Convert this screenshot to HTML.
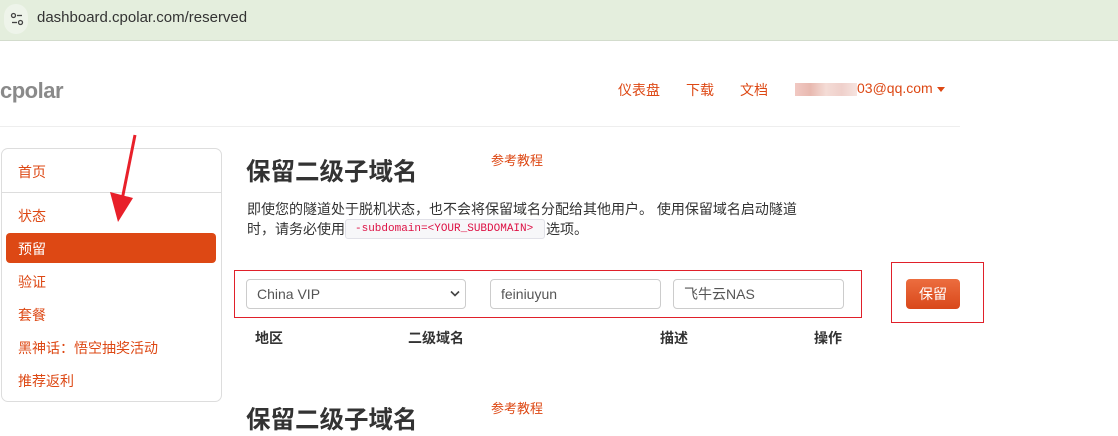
<!DOCTYPE html>
<html><head><meta charset="utf-8"><style>
*{margin:0;padding:0;box-sizing:border-box}
body{width:1118px;height:406px;overflow:hidden;background:#fff;font-family:"Liberation Sans","Noto Sans CJK SC",sans-serif;position:relative;color:#333}
.a{position:absolute;white-space:nowrap}
.o{color:#dd4814}
.nav{font-size:14px;top:80px}
.si{font-size:14px;left:18px;color:#dd4814}
.inp{position:absolute;top:279px;height:30px;border:1px solid #ccc;border-radius:4px;font-size:14px;padding:0 10px;line-height:28px;color:#555;background:#fff}
.th{font-size:14px;font-weight:bold;top:328px}
</style></head><body>
<div class="a" style="left:0;top:0;width:1118px;height:41px;background:#e4eedd;border-bottom:1px solid #d3dccd"></div>
<div class="a" style="left:4px;top:4px;width:24px;height:30px;border-radius:12px;background:#eef4ea"></div>
<svg class="a" style="left:10px;top:12px" width="14" height="14" viewBox="0 0 14 14" fill="none" stroke="#444" stroke-width="1.3"><circle cx="3.5" cy="3.5" r="2"/><line x1="7" y1="3.5" x2="12" y2="3.5"/><circle cx="10.5" cy="10.5" r="2"/><line x1="2" y1="10.5" x2="7" y2="10.5"/></svg>
<div class="a" style="left:37px;top:9px;font-size:15px;color:#333">dashboard.cpolar.com/reserved</div>
<div class="a" style="left:0;top:78px;font-size:22px;font-weight:bold;color:#8a8a8a;letter-spacing:-0.5px">cpolar</div>
<div class="a nav o" style="left:618px">仪表盘</div>
<div class="a nav o" style="left:686px">下载</div>
<div class="a nav o" style="left:740px">文档</div>
<div class="a" style="left:795px;top:83px;width:62px;height:13px;background:linear-gradient(90deg,#f1c9c3,#e8b9b0,#f4dcd6,#efd0cb,#f6e4e0)"></div>
<div class="a nav o" style="left:857px">03@qq.com</div>
<div class="a" style="left:937px;top:87px;border-left:4px solid transparent;border-right:4px solid transparent;border-top:5px solid #dd4814"></div>
<div class="a" style="left:0;top:126px;width:960px;height:1px;background:#eee"></div>
<div class="a" style="left:1px;top:148px;width:221px;height:254px;border:1px solid #ddd;border-radius:7px"></div>
<div class="a" style="left:1px;top:192px;width:221px;height:1px;background:#ddd"></div>
<div class="a si" style="top:162px">首页</div>
<div class="a si" style="top:206px">状态</div>
<div class="a" style="left:6px;top:233px;width:210px;height:30px;background:#dd4814;border-radius:4px"></div>
<div class="a si" style="top:239px;color:#fff">预留</div>
<div class="a si" style="top:272px">验证</div>
<div class="a si" style="top:305px">套餐</div>
<div class="a si" style="top:338px">黑神话：悟空抽奖活动</div>
<div class="a si" style="top:371px">推荐返利</div>
<svg class="a" style="left:100px;top:130px" width="50" height="100"><line x1="35" y1="5" x2="22" y2="70" stroke="#e8202a" stroke-width="3"/><polygon points="10,62 33,68 18,92" fill="#e8202a"/></svg>
<div class="a" style="left:246px;top:153px;font-size:24.5px;font-weight:bold;color:#333">保留二级子域名</div>
<div class="a o" style="left:491px;top:150px;font-size:13px">参考教程</div>
<div class="a" style="left:247px;top:199px;font-size:14px">即使您的隧道处于脱机状态，也不会将保留域名分配给其他用户。 使用保留域名启动隧道</div>
<div class="a" style="left:247px;top:219px;font-size:14px">时，请务必使用</div>
<div class="a" style="left:345px;top:219px;width:200px;height:20px;background:#f7f7f9;border:1px solid #e1e1e8;border-radius:3px;font-family:'Liberation Mono',monospace;font-size:11px;color:#d14;line-height:18px;padding-left:9px">-subdomain=&lt;YOUR_SUBDOMAIN&gt;</div>
<div class="a" style="left:546px;top:219px;font-size:14px">选项。</div>
<div class="a" style="left:234px;top:270px;width:628px;height:48px;border:1.5px solid #e0202a"></div>
<div class="inp" style="left:246px;width:220px">China VIP</div>
<svg class="a" style="left:450px;top:290px" width="10" height="8"><polyline points="1,1.5 5,5.5 9,1.5" fill="none" stroke="#444" stroke-width="1.6"/></svg>
<div class="inp" style="left:490px;width:171px">feiniuyun</div>
<div class="inp" style="left:673px;width:171px">飞牛云NAS</div>
<div class="a" style="left:891px;top:262px;width:93px;height:61px;border:1.5px solid #e0202a"></div>
<div class="a" style="left:906px;top:279px;width:54px;height:30px;border-radius:4px;background:linear-gradient(#ec6d3f,#d9481a);color:#fff;font-size:14px;text-align:center;line-height:30px">保留</div>
<div class="a th" style="left:255px">地区</div>
<div class="a th" style="left:408px">二级域名</div>
<div class="a th" style="left:660px">描述</div>
<div class="a th" style="left:814px">操作</div>
<div class="a" style="left:246px;top:401px;font-size:24.5px;font-weight:bold;color:#333">保留二级子域名</div>
<div class="a o" style="left:491px;top:398px;font-size:13px">参考教程</div>
</body></html>
